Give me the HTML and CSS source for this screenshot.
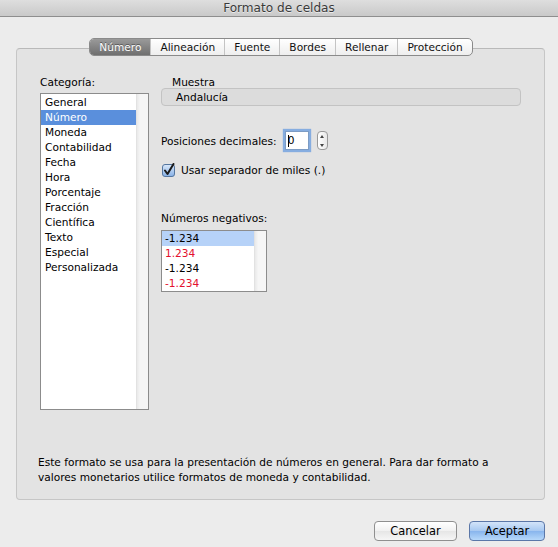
FILE: index.html
```html
<!DOCTYPE html>
<html lang="es">
<head>
<meta charset="utf-8">
<title>Formato de celdas</title>
<link rel="stylesheet" href="styles.css">
</head>
<body>
<div class="titlebar">Formato de celdas</div>
<div class="sheet">
  <div class="tabs">
    <div class="tab sel">Número</div>
    <div class="tab">Alineación</div>
    <div class="tab">Fuente</div>
    <div class="tab">Bordes</div>
    <div class="tab">Rellenar</div>
    <div class="tab">Protección</div>
  </div>
  <div class="group">
    <div class="top">
      <div class="leftcol">
        <div class="label">Categoría:</div>
        <div class="catlist">
          <div class="rows">
            <div class="row">General</div>
            <div class="row sel">Número</div>
            <div class="row">Moneda</div>
            <div class="row">Contabilidad</div>
            <div class="row">Fecha</div>
            <div class="row">Hora</div>
            <div class="row">Porcentaje</div>
            <div class="row">Fracción</div>
            <div class="row">Científica</div>
            <div class="row">Texto</div>
            <div class="row">Especial</div>
            <div class="row">Personalizada</div>
          </div>
          <div class="track"></div>
        </div>
      </div>
      <div class="rightcol">
        <div class="label sample-label">Muestra</div>
        <div class="sample">Andalucía</div>
        <div class="decrow">
          <span>Posiciones decimales:</span>
          <div class="field"><span class="caret"></span>0</div>
          <div class="stepper">
            <svg width="10" height="18" viewBox="0 0 10 18">
              <path d="M3 6 L5 3 L7 6 Z" fill="#444"/>
              <path d="M3 12 L5 15 L7 12 Z" fill="#444"/>
            </svg>
          </div>
        </div>
        <div class="checkrow">
          <svg class="check" width="13" height="14" viewBox="0 0 13 14">
            <defs>
              <linearGradient id="cb" x1="0" y1="0" x2="0" y2="1">
                <stop offset="0" stop-color="#dbe9fa"/>
                <stop offset="1" stop-color="#86b0e6"/>
              </linearGradient>
            </defs>
            <rect x="0.5" y="1.5" width="12" height="12" rx="2.5" fill="url(#cb)" stroke="#55769f"/>
            <path d="M3 7.5 L5.5 11 L11.5 1" fill="none" stroke="#1b1b1b" stroke-width="2" stroke-linecap="round" stroke-linejoin="round"/>
          </svg>
          <span>Usar separador de miles (.)</span>
        </div>
        <div class="label neg-label">Números negativos:</div>
        <div class="neglist">
          <div class="rows">
            <div class="row nsel">-1.234</div>
            <div class="row red">1.234</div>
            <div class="row">-1.234</div>
            <div class="row red">-1.234</div>
          </div>
          <div class="track"></div>
        </div>
      </div>
    </div>
    <div class="desc">Este formato se usa para la presentación de números en general. Para dar formato a<br>valores monetarios utilice formatos de moneda y contabilidad.</div>
  </div>
  <div class="buttons">
    <div class="btn cancel">Cancelar</div>
    <div class="btn ok">Aceptar</div>
  </div>
</div>
</body>
</html>
```
FILE: styles.css
```css
html, body {
  margin: 0;
  padding: 0;
}
body {
  width: 558px;
  height: 547px;
  background: #ececec;
  font-family: "DejaVu Sans", "Liberation Sans", sans-serif;
  font-size: 10.6px;
  color: #000;
  overflow: hidden;
}
.titlebar {
  height: 16px;
  border-bottom: 1px solid #8e8e8e;
  background: linear-gradient(#dedede, #c9c9c9);
  text-align: center;
  font-size: 12.1px;
  line-height: 16px;
  color: #3a3a3a;
  text-shadow: 0 1px 0 rgba(255,255,255,0.6);
}
.sheet {
  display: flex;
  flex-direction: column;
  padding: 21px 13px 0 16px;
}
.tabs {
  align-self: center;
  display: flex;
  height: 16px;
  border: 1px solid #8a8a8a;
  border-radius: 5px;
  overflow: hidden;
  background: linear-gradient(#ffffff, #eeeeee);
  margin-bottom: -8px;
  position: relative;
  z-index: 1;
  margin-left: 1px;
}
.tab {
  padding: 0 9px;
  line-height: 16px;
  color: #111;
  border-left: 1px solid #c4c4c4;
}
.tab:first-child {
  border-left: none;
}
.tab.sel {
  background: linear-gradient(#9a9a9a, #6f6f6f);
  color: #fff;
  text-shadow: 0 -1px 0 rgba(0,0,0,0.4);
}
.group {
  height: 450px;
  border: 1px solid #c6c6c6;
  border-top-color: #b9b9b9;
  border-radius: 4px;
  background: #e3e3e3;
  display: flex;
  flex-direction: column;
  justify-content: space-between;
}
.top {
  display: flex;
  padding-top: 27px;
  padding-left: 23px;
}
.label {
  line-height: 12px;
  height: 12px;
}
.leftcol {
  width: 109px;
}
.catlist {
  margin-top: 5px;
  height: 315px;
  border: 1px solid #8c8c8c;
  background: #fff;
  display: flex;
}
.rows {
  flex: 1;
  padding-top: 1px;
}
.row {
  height: 15px;
  line-height: 15px;
  padding-left: 4px;
  white-space: nowrap;
}
.catlist .row.sel {
  background: #5a8fdc;
  color: #fff;
}
.track {
  width: 11px;
  background: linear-gradient(90deg, #e9e9e9, #f6f6f6 30%, #f6f6f6);
  border-left: 1px solid #e2e2e2;
}
.rightcol {
  margin-left: 12px;
  display: flex;
  flex-direction: column;
  align-items: flex-start;
}
.sample-label {
  padding-left: 11px;
}
.sample {
  width: 344px;
  height: 16px;
  line-height: 16px;
  border: 1px solid #c3c3c3;
  border-radius: 4px;
  background: #dcdcdc;
  padding-left: 14px;
}
.decrow {
  margin-top: 22px;
  height: 25px;
  display: flex;
  align-items: center;
}
.field {
  margin-left: 8px;
  width: 20px;
  height: 17px;
  line-height: 17px;
  border: 1px solid #7d9cc4;
  background: #fff;
  box-shadow: 0 0 1px 2px #86ade0;
  padding-left: 2px;
  display: flex;
  align-items: center;
}
.caret {
  width: 1px;
  height: 12px;
  background: #000;
  margin-right: -1px;
}
.stepper {
  margin-left: 8px;
  width: 9px;
  height: 17px;
  border: 1px solid #999;
  border-radius: 4px;
  background: linear-gradient(90deg, #ffffff, #e8e8e8);
  display: flex;
  justify-content: center;
  align-items: center;
  overflow: hidden;
}
.stepper svg {
  flex: none;
}
.checkrow {
  margin-top: 10px;
  height: 14px;
  display: flex;
  align-items: center;
  padding-left: 1px;
}
.check {
  margin-right: 6px;
}
.neg-label {
  margin-top: 35px;
}
.neglist {
  margin-top: 6px;
  width: 104px;
  height: 60px;
  border: 1px solid #8c8c8c;
  background: #fff;
  display: flex;
}
.neglist .rows {
  padding-top: 0;
}
.neglist .row {
  padding-left: 3px;
}
.row.nsel {
  background: #b6d2f8;
}
.row.red {
  color: #e3112e;
}
.desc {
  padding: 0 0 14px 21px;
  line-height: 15px;
}
.buttons {
  margin-top: 21px;
  display: flex;
  justify-content: flex-end;
  gap: 12px;
}
.btn {
  height: 18px;
  line-height: 18px;
  text-align: center;
  border-radius: 4px;
  font-size: 11.4px;
}
.cancel {
  width: 81px;
  border: 1px solid #8f8f8f;
  background: linear-gradient(#ffffff, #f1f1f1 50%, #e6e6e6 51%, #f6f6f6);
}
.ok {
  width: 74px;
  border: 1px solid #5b77a8;
  background: linear-gradient(#d3e4f9, #a6c8f1 50%, #88b5ed 51%, #b6d8fa);
}
```
